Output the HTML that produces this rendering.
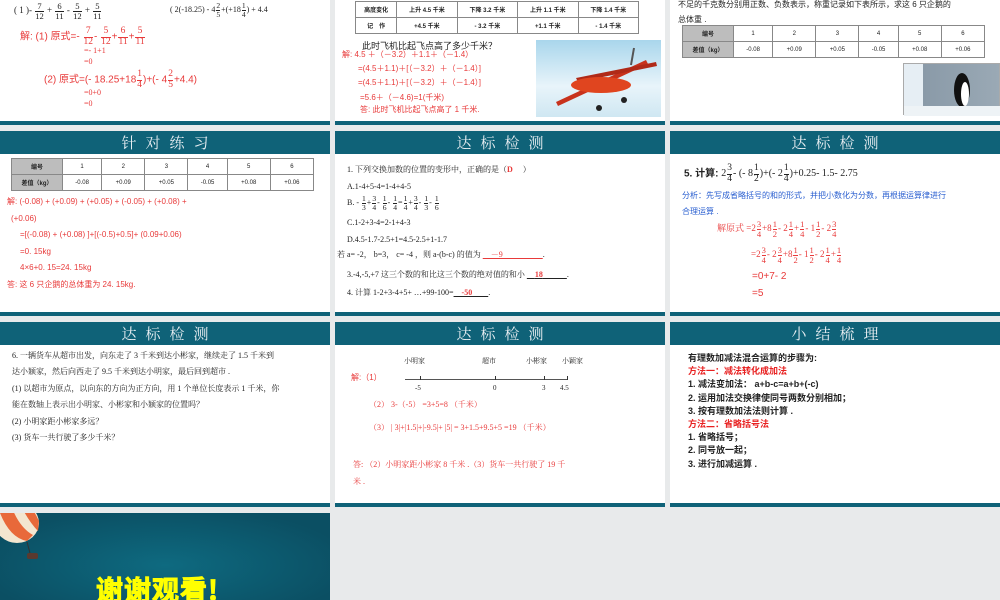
<!DOCTYPE html>
<html><head><meta charset="utf-8">
<style>
*{margin:0;padding:0;box-sizing:border-box}
body{width:1000px;height:600px;background:#e8eaeb;position:relative;overflow:hidden;font-family:"Liberation Sans","Noto Sans CJK SC",sans-serif;color:#222}
.s{position:absolute;background:#fff;overflow:hidden}
.bar{position:absolute;left:0;right:0;bottom:0;height:4px;background:#0f6278}
.hd{position:absolute;left:0;right:0;top:0;height:23px;background:#0f6278;color:#e8eef2;text-align:center;font:15px/23px "Noto Serif CJK SC","WenQuanYi Zen Hei",serif;letter-spacing:9px;padding-left:9px}
.t{position:absolute;white-space:nowrap;font-size:8px;line-height:10px}
.r{color:#e83a3a}
.sf{font-family:"Liberation Serif","Noto Serif CJK SC",serif}
.fr{display:inline-block;vertical-align:middle;text-align:center;line-height:1em;font-size:.95em;margin:0 1px}
.fr span{display:block}
.fr span:first-child{border-bottom:1px solid currentColor}
table{border-collapse:collapse;position:absolute;font-size:6px;text-align:center}
td{border:1px solid #888;height:16px}
td.g{background:#bdbdbd;font-weight:bold}
</style></head><body>

<!-- Row 1 -->
<div class="s" style="left:0;top:0;width:330px;height:125px">
 <div class="t sf" style="left:14px;top:2px;font-size:9px">( 1 )- <span class="fr"><span>7</span><span>12</span></span> + <span class="fr"><span>6</span><span>11</span></span> - <span class="fr"><span>5</span><span>12</span></span> + <span class="fr"><span>5</span><span>11</span></span></div>
 <div class="t sf" style="left:170px;top:2px;font-size:8px">( 2(-18.25) - 4<span class="fr"><span>2</span><span>5</span></span>+(+18<span class="fr"><span>1</span><span>4</span></span>) + 4.4</div>
 <div class="t r" style="left:20px;top:27px;font-size:10px">解:  (1) 原式=- <span class="fr sf"><span>7</span><span>12</span></span>- <span class="fr sf"><span>5</span><span>12</span></span>+<span class="fr sf"><span>6</span><span>11</span></span>+<span class="fr sf"><span>5</span><span>11</span></span></div>
 <div class="t r sf" style="left:84px;top:46px;font-size:8px">=- 1+1</div>
 <div class="t r sf" style="left:84px;top:57px;font-size:8px">=0</div>
 <div class="t r" style="left:44px;top:70px;font-size:10px">(2) 原式=(- 18.25+18<span class="fr sf"><span>1</span><span>4</span></span>)+(- 4<span class="fr sf"><span>2</span><span>5</span></span>+4.4)</div>
 <div class="t r sf" style="left:84px;top:88px;font-size:8px">=0+0</div>
 <div class="t r sf" style="left:84px;top:99px;font-size:8px">=0</div>
 <div class="bar"></div>
</div>
<div class="s" style="left:335px;top:0;width:330px;height:125px">
 <table style="left:20px;top:1px;width:284px"><tr><td class="g" style="background:#fff">高度变化</td><td><b>上升 4.5 千米</b></td><td><b>下降 3.2 千米</b></td><td><b>上升 1.1 千米</b></td><td><b>下降 1.4 千米</b></td></tr><tr><td><b>记　作</b></td><td><b>+4.5 千米</b></td><td><b>- 3.2 千米</b></td><td><b>+1.1 千米</b></td><td><b>- 1.4 千米</b></td></tr></table>
 <div class="t" style="left:27px;top:41px;font-size:9px">此时飞机比起飞点高了多少千米？</div>
 <div class="t r" style="left:7px;top:50px">解: 4.5 ＋（－3.2）＋1.1＋（－1.4）</div>
 <div class="t r" style="left:23px;top:64px">=(4.5＋1.1)＋[（－3.2）＋（－1.4）]</div>
 <div class="t r" style="left:23px;top:78px">=(4.5＋1.1)＋[（－3.2）＋（－1.4）]</div>
 <div class="t r" style="left:25px;top:93px">=5.6＋（－4.6)=1(千米)</div>
 <div class="t r" style="left:25px;top:105px">答: 此时飞机比起飞点高了 1 千米.</div>
 <div style="position:absolute;left:201px;top:40px;width:125px;height:77px;background:linear-gradient(#a9d6ec,#e8f4fa 60%,#cfe7f2)">
  <svg width="125" height="77"><polygon points="20,62 110,20 112,24 22,66" fill="#c8321c"/><polygon points="40,38 120,22 121,26 42,42" fill="#b02a18"/><ellipse cx="65" cy="45" rx="30" ry="8" fill="#e0451f"/><circle cx="63" cy="68" r="3" fill="#222"/><circle cx="88" cy="60" r="3" fill="#222"/><line x1="95" y1="25" x2="98" y2="8" stroke="#555" stroke-width="2"/></svg>
 </div>
 <div class="bar"></div>
</div>
<div class="s" style="left:670px;top:0;width:330px;height:125px">
 <div class="t" style="left:8px;top:0px">不足的千克数分别用正数、负数表示，称重记录如下表所示，求这 6 只企鹅的</div>
 <div class="t" style="left:8px;top:15px">总体重 .</div>
 <table style="left:12px;top:25px;width:303px"><tr><td class="g" style="width:51px">编号</td><td>1</td><td>2</td><td>3</td><td>4</td><td>5</td><td>6</td></tr><tr><td class="g">差值（kg）</td><td>-0.08</td><td>+0.09</td><td>+0.05</td><td>-0.05</td><td>+0.08</td><td>+0.06</td></tr></table>
 <div style="position:absolute;left:233px;top:63px;width:97px;height:52px;background:linear-gradient(90deg,#e6eef4 0 20%,#8a9aa8 20%,#9aa9b5);border:1px solid #aaa">
  <svg width="97" height="52"><ellipse cx="58" cy="26" rx="8" ry="17" fill="#111"/><ellipse cx="61" cy="30" rx="4" ry="12" fill="#fff"/><rect x="0" y="42" width="97" height="10" fill="#eef3f6"/></svg>
 </div>
 <div class="bar"></div>
</div>

<!-- Row 2 -->
<div class="s" style="left:0;top:131px;width:330px;height:185px">
 <div class="hd">针对练习</div>
 <table style="left:11px;top:27px;width:303px"><tr><td class="g" style="width:51px">编号</td><td>1</td><td>2</td><td>3</td><td>4</td><td>5</td><td>6</td></tr><tr><td class="g">差值（kg）</td><td>-0.08</td><td>+0.09</td><td>+0.05</td><td>-0.05</td><td>+0.08</td><td>+0.06</td></tr></table>
 <div class="t r" style="left:7px;top:66px">解: (-0.08) + (+0.09) + (+0.05) + (-0.05) + (+0.08) +</div>
 <div class="t r" style="left:11px;top:83px">(+0.06)</div>
 <div class="t r" style="left:20px;top:99px">=[(-0.08) + (+0.08) ]+[(-0.5)+0.5]+ (0.09+0.06)</div>
 <div class="t r" style="left:20px;top:116px">=0. 15kg</div>
 <div class="t r" style="left:20px;top:132px">4×6+0. 15=24. 15kg</div>
 <div class="t r" style="left:7px;top:149px">答: 这 6 只企鹅的总体重为 24. 15kg.</div>
 <div class="bar"></div>
</div>
<div class="s sf" style="left:335px;top:131px;width:330px;height:185px">
 <div class="hd">达标检测</div>
 <div class="t sf" style="left:12px;top:34px">1. 下列交换加数的位置的变形中，正确的是（<b class="r">D</b>　 ）</div>
 <div class="t sf" style="left:12px;top:51px">A.1-4+5-4=1-4+4-5</div>
 <div class="t sf" style="left:12px;top:64px">B. - <span class="fr"><span>1</span><span>3</span></span>+<span class="fr"><span>3</span><span>4</span></span>- <span class="fr"><span>1</span><span>6</span></span>- <span class="fr"><span>1</span><span>4</span></span>=<span class="fr"><span>1</span><span>4</span></span>+<span class="fr"><span>3</span><span>4</span></span>- <span class="fr"><span>1</span><span>3</span></span>- <span class="fr"><span>1</span><span>6</span></span></div>
 <div class="t sf" style="left:12px;top:87px">C.1-2+3-4=2-1+4-3</div>
 <div class="t sf" style="left:12px;top:104px">D.4.5-1.7-2.5+1=4.5-2.5+1-1.7</div>
 <div class="t sf" style="left:2px;top:119px">若 a= -2， b=3， c= -4 ，则 a-(b-c) 的值为 <span class="r" style="text-decoration:underline">　－9　　　　　</span>.</div>
 <div class="t sf" style="left:12px;top:139px">3.-4,-5,+7 这三个数的和比这三个数的绝对值的和小 <span style="text-decoration:underline">　<b class="r">18</b>　　　</span>.</div>
 <div class="t sf" style="left:12px;top:157px">4. 计算 1-2+3-4+5+ …+99-100=<span style="text-decoration:underline"><b class="r">　-50　　</b></span>.</div>
 <div class="bar"></div>
</div>
<div class="s" style="left:670px;top:131px;width:330px;height:185px">
 <div class="hd">达标检测</div>
 <div class="t" style="left:14px;top:33px;font-size:10px;line-height:14px"><b>5. 计算:</b> <span class="sf">2<span class="fr"><span>3</span><span>4</span></span>- (- 8<span class="fr"><span>1</span><span>2</span></span>)+(- 2<span class="fr"><span>1</span><span>4</span></span>)+0.25- 1.5- 2.75</span></div>
 <div class="t" style="left:12px;top:60px;color:#2a5fd0">分析：先写成省略括号的和的形式，并把小数化为分数，再根据运算律进行</div>
 <div class="t" style="left:12px;top:76px;color:#2a5fd0">合理运算 .</div>
 <div class="t r sf" style="left:47px;top:89px;font-size:9px">解原式 =2<span class="fr"><span>3</span><span>4</span></span>+8<span class="fr"><span>1</span><span>2</span></span>- 2<span class="fr"><span>1</span><span>4</span></span>+<span class="fr"><span>1</span><span>4</span></span>- 1<span class="fr"><span>1</span><span>2</span></span>- 2<span class="fr"><span>3</span><span>4</span></span></div>
 <div class="t r sf" style="left:81px;top:115px;font-size:9px">=2<span class="fr"><span>3</span><span>4</span></span>- 2<span class="fr"><span>3</span><span>4</span></span>+8<span class="fr"><span>1</span><span>2</span></span>- 1<span class="fr"><span>1</span><span>2</span></span>- 2<span class="fr"><span>1</span><span>4</span></span>+<span class="fr"><span>1</span><span>4</span></span></div>
 <div class="t r" style="left:82px;top:141px;font-size:10px">=0+7- 2</div>
 <div class="t r" style="left:82px;top:158px;font-size:10px">=5</div>
 <div class="bar"></div>
</div>

<!-- Row 3 -->
<div class="s" style="left:0;top:322px;width:330px;height:185px">
 <div class="hd">达标检测</div>
 <div class="t sf" style="left:12px;top:29px">6. 一辆货车从超市出发，向东走了 3 千米到达小彬家，继续走了 1.5 千米到</div>
 <div class="t sf" style="left:12px;top:45px">达小颖家，然后向西走了 9.5 千米到达小明家，最后回到超市 .</div>
 <div class="t sf" style="left:12px;top:62px">(1) 以超市为原点，以向东的方向为正方向，用 1 个单位长度表示 1 千米，你</div>
 <div class="t sf" style="left:12px;top:78px">能在数轴上表示出小明家、小彬家和小颖家的位置吗？</div>
 <div class="t sf" style="left:12px;top:95px">(2) 小明家距小彬家多远？</div>
 <div class="t sf" style="left:12px;top:111px">(3) 货车一共行驶了多少千米？</div>
 <div class="bar"></div>
</div>
<div class="s" style="left:335px;top:322px;width:330px;height:185px">
 <div class="hd">达标检测</div>
 <div class="t sf" style="left:69px;top:34px;font-size:7px">小明家</div>
 <div class="t sf" style="left:147px;top:34px;font-size:7px">超市</div>
 <div class="t sf" style="left:191px;top:34px;font-size:7px">小彬家</div>
 <div class="t sf" style="left:227px;top:34px;font-size:7px">小颖家</div>
 <div style="position:absolute;left:70px;top:57px;width:163px;height:1px;background:#555"></div>
 <div style="position:absolute;left:85px;top:54px;width:1px;height:4px;background:#333"></div>
 <div style="position:absolute;left:160px;top:54px;width:1px;height:4px;background:#333"></div>
 <div style="position:absolute;left:209px;top:54px;width:1px;height:4px;background:#333"></div>
 <div style="position:absolute;left:232px;top:54px;width:1px;height:4px;background:#333"></div>
 <div class="t sf" style="left:80px;top:61px;font-size:7px">-5</div>
 <div class="t sf" style="left:158px;top:61px;font-size:7px">0</div>
 <div class="t sf" style="left:207px;top:61px;font-size:7px">3</div>
 <div class="t sf" style="left:225px;top:61px;font-size:7px">4.5</div>
 <div class="t r" style="left:16px;top:51px">解:（1）</div>
 <div class="t r sf" style="left:34px;top:78px">（2） 3-（-5） =3+5=8 （千米）</div>
 <div class="t r sf" style="left:34px;top:101px">（3）  | 3|+|1.5|+|-9.5|+ |5| = 3+1.5+9.5+5 =19 （千米）</div>
 <div class="t r sf" style="left:18px;top:138px">答:  （2）小明家距小彬家 8 千米 .（3）货车一共行驶了 19 千</div>
 <div class="t r sf" style="left:18px;top:155px">米 .</div>
 <div class="bar"></div>
</div>
<div class="s" style="left:670px;top:322px;width:330px;height:185px">
 <div class="hd">小结梳理</div>
 <div style="position:absolute;left:18px;top:30px;font-size:9px;line-height:13.2px;font-weight:bold;white-space:nowrap">
  <div>有理数加减法混合运算的步骤为:</div>
  <div style="color:#e82020">方法一：减法转化成加法</div>
  <div>1. 减法变加法： a+b-c=a+b+(-c)</div>
  <div>2. 运用加法交换律使同号两数分别相加；</div>
  <div>3. 按有理数加法法则计算 .</div>
  <div style="color:#e82020">方法二：省略括号法</div>
  <div>1. 省略括号；</div>
  <div>2. 同号放一起；</div>
  <div>3. 进行加减运算 .</div>
 </div>
 <div class="bar"></div>
</div>

<!-- Row 4 -->
<div class="s" style="left:0;top:513px;width:330px;height:87px;background:radial-gradient(ellipse at 50% 60%,#0e6a80,#0b4f63 80%)">
 <svg style="position:absolute;left:0;top:0" width="45" height="60"><ellipse cx="17" cy="10" rx="22" ry="20" fill="#f3e6d0"/><path d="M0,0 Q10,25 27,28 L33,22 Q20,15 12,-5Z" fill="#e8693a"/><path d="M22,-5 Q30,10 38,18 L39,8 Q35,0 32,-5Z" fill="#e8693a"/><line x1="27" y1="29" x2="30" y2="40" stroke="#333"/><rect x="27" y="40" width="11" height="6" rx="2" fill="#5a3a30"/></svg>
 <div style="position:absolute;left:96px;top:59px;font:bold 27px/34px 'Noto Sans CJK SC','WenQuanYi Zen Hei',sans-serif;color:#ffff00;-webkit-text-stroke:1px #ffff00;letter-spacing:1px;white-space:nowrap">谢谢观看!</div>
</div>
</body></html>
